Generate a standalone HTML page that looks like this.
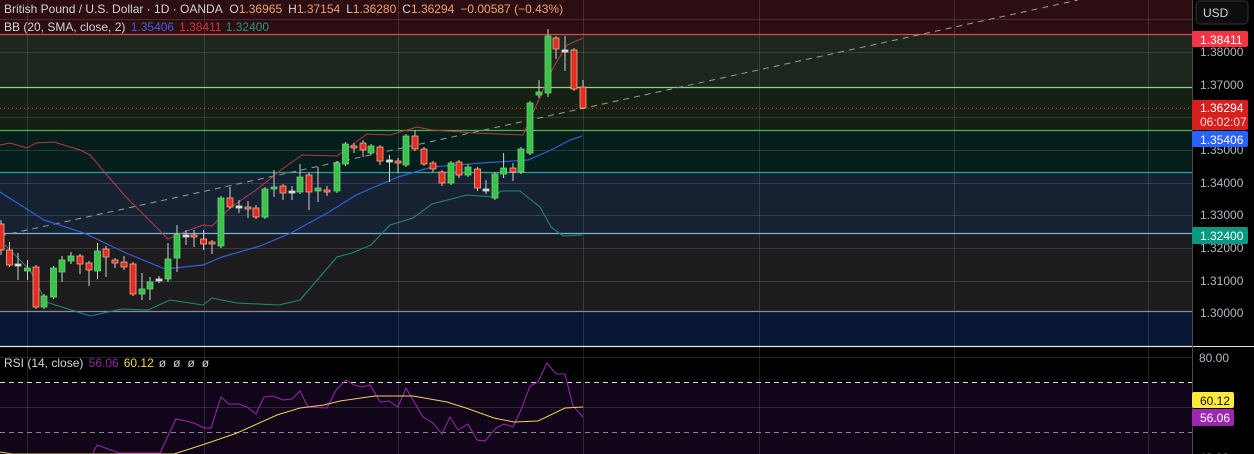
<!DOCTYPE html>
<html><head><meta charset="utf-8"><style>
html,body{margin:0;padding:0;background:#000;width:1254px;height:454px;overflow:hidden;font-family:"Liberation Sans",sans-serif}
svg text{font-family:"Liberation Sans",sans-serif}
</style></head><body>
<svg width="1254" height="454" viewBox="0 0 1254 454" xmlns="http://www.w3.org/2000/svg">
<!-- bands -->
<rect x="0" y="0" width="1192" height="34" fill="#2c0d12"/>
<rect x="0" y="34" width="1192" height="53" fill="#1c261c"/>
<rect x="0" y="87" width="1192" height="43" fill="#132012"/>
<rect x="0" y="130" width="1192" height="42" fill="#051d1b"/>
<rect x="0" y="172" width="1192" height="61" fill="#162232"/>
<rect x="0" y="233" width="1192" height="78" fill="#1c1c1e"/>
<rect x="0" y="311" width="1192" height="35" fill="#081634"/>
<rect x="0" y="347" width="1192" height="35" fill="#000"/>
<rect x="0" y="382" width="1192" height="72" fill="#110519"/>
<!-- grid -->
<g stroke="#ffffff" stroke-opacity="0.13" stroke-width="1">
<line x1="0" y1="19.5" x2="1192" y2="19.5"/><line x1="0" y1="52.5" x2="1192" y2="52.5"/><line x1="0" y1="117.5" x2="1192" y2="117.5"/><line x1="0" y1="150.5" x2="1192" y2="150.5"/><line x1="0" y1="183.5" x2="1192" y2="183.5"/><line x1="0" y1="215.5" x2="1192" y2="215.5"/><line x1="0" y1="248.5" x2="1192" y2="248.5"/><line x1="0" y1="281.5" x2="1192" y2="281.5"/><line x1="0" y1="357.5" x2="1192" y2="357.5"/><line x1="0" y1="407.5" x2="1192" y2="407.5"/>
<line x1="27.5" y1="0" x2="27.5" y2="454"/><line x1="204.5" y1="0" x2="204.5" y2="454"/><line x1="398.5" y1="0" x2="398.5" y2="454"/><line x1="583.5" y1="0" x2="583.5" y2="454"/><line x1="759.5" y1="0" x2="759.5" y2="454"/><line x1="954.5" y1="0" x2="954.5" y2="454"/><line x1="1148.5" y1="0" x2="1148.5" y2="454"/>
</g>
<!-- level lines -->
<line x1="0" y1="34.5" x2="1192" y2="34.5" stroke="#d9474d" stroke-width="1.2"/>
<line x1="0" y1="87.5" x2="1192" y2="87.5" stroke="#8ed08e" stroke-width="1.2"/>
<line x1="0" y1="130.5" x2="1192" y2="130.5" stroke="#4caf50" stroke-width="1.2"/>
<line x1="0" y1="172.5" x2="1192" y2="172.5" stroke="#26a69a" stroke-width="1.2"/>
<line x1="0" y1="233.5" x2="1192" y2="233.5" stroke="#6fb3e8" stroke-width="1.2"/>
<line x1="0" y1="311.5" x2="1192" y2="311.5" stroke="#8a8d96" stroke-width="1.2"/>
<line x1="0" y1="108.5" x2="1192" y2="108.5" stroke="#e0403a" stroke-width="1" stroke-dasharray="1,3"/>
<line x1="0" y1="382.5" x2="1192" y2="382.5" stroke="#dddddd" stroke-width="1" stroke-dasharray="5,4"/>
<line x1="0" y1="432.5" x2="1192" y2="432.5" stroke="#888" stroke-width="1" stroke-dasharray="5,4"/>
<!-- trendline -->
<line x1="0" y1="236" x2="1078" y2="0" stroke="#9a9a9a" stroke-width="1" stroke-dasharray="6,5"/>
<!-- bollinger -->
<polyline fill="none" stroke="#b83a44" stroke-width="1" points="0,145 10,143 27,148 36,143 54,142 80,150 90,155 107,175 126,197 147,218 168,239 184,232 203,225 212,226 230,208 256,190 281,170 302,155 337,156 367,134 390,135 417,127 432,130 475,133 523,135 540,97 553,68 567,45 583,38"/>
<polyline fill="none" stroke="#2f62d8" stroke-width="1.2" points="0,192 44,220 84,233 126,253 165,269 203,265 222,257 260,246 291,233 329,212 356,195 398,177 432,167 482,163 528,160 551,150 570,140 582,136"/>
<polyline fill="none" stroke="#1f8a7c" stroke-width="1" points="5,245 30,270 46,302 90,316 122,309 148,310 170,300 203,305 212,298 237,303 279,305 300,300 337,257 352,253 371,245 390,225 413,218 432,204 467,195 494,197 501,191 520,191 540,207 551,227 563,236 582,235"/>
<!-- candles -->
<g id="c" stroke-width="1"></g>
<!-- RSI -->
<polyline fill="none" stroke="#9c27b0" stroke-width="1" points="93,453 97,445 119,453 160,453 176,419 186,421 194,423 204,428 211,428 221,397 229,404 239,404 247,407 256,414 264,397 273,396 283,400 292,399 300,391 308,407 327,408 336,390 346,380 354,385 362,387 370,385 380,402 389,401 398,407 406,388 423,417 433,423 442,434 450,417 458,430 468,424 477,440 485,441 496,428 504,424 513,427 521,410 530,386 538,382 547,363 556,374 565,374 573,406 583,417"/>
<polyline fill="none" stroke="#f2d05a" stroke-width="1" points="0,452 12,454 174,454 205,444 237,433 277,415 300,408 324,405 340,401 375,396 413,396 447,402 466,408 494,418 514,422 538,421 565,408 583,407"/>
<!-- separator -->
<line x1="0" y1="346.5" x2="1254" y2="346.5" stroke="#e6e6e6" stroke-width="1.2"/>
<!-- axis -->
<rect x="1192" y="0" width="62" height="346" fill="#000"/>
<rect x="1192" y="347" width="62" height="107" fill="#000"/>
<line x1="1192.5" y1="0" x2="1192.5" y2="454" stroke="#4a4a4a"/>
<rect x="1196" y="1" width="52" height="23" rx="4" fill="#0d0d0d" stroke="#333"/>
<text x="1203" y="17" fill="#d1d4dc" font-size="12">USD</text>
<g fill="#b2b5be" font-size="12">
<text x="1200" y="56">1.38000</text><text x="1200" y="89">1.37000</text><text x="1200" y="154">1.35000</text><text x="1200" y="187">1.34000</text><text x="1200" y="219">1.33000</text><text x="1200" y="252">1.32000</text><text x="1200" y="285">1.31000</text><text x="1200" y="317">1.30000</text><text x="1199" y="362">80.00</text><text x="1199" y="462">40.00</text>
</g>
<rect x="1192" y="31" width="56" height="16" rx="2" fill="#f23645"/><text x="1200" y="44" fill="#fff" font-size="12">1.38411</text>
<rect x="1192" y="100" width="56" height="30" rx="2" fill="#d5201f"/><text x="1200" y="112" fill="#fff" font-size="12">1.36294</text><text x="1200" y="126" fill="#ffd6d6" font-size="12">06:02:07</text>
<rect x="1192" y="131" width="56" height="16" rx="2" fill="#2962ff"/><text x="1200" y="144" fill="#fff" font-size="12">1.35406</text>
<rect x="1192" y="227" width="56" height="17" rx="2" fill="#089981"/><text x="1200" y="240" fill="#fff" font-size="12">1.32400</text>
<rect x="1192" y="392" width="42" height="16" rx="2" fill="#ffeb3b"/><text x="1200" y="405" fill="#111" font-size="12">60.12</text>
<rect x="1192" y="409" width="42" height="17" rx="2" fill="#9c27b0"/><text x="1200" y="422" fill="#fff" font-size="12">56.06</text>
<!-- legends -->
<g font-size="12">
<text x="4" y="13" fill="#d1d4dc">British Pound / U.S. Dollar · 1D · OANDA <tspan dx="4">O</tspan><tspan fill="#f0a070">1.36965</tspan><tspan dx="6">H</tspan><tspan fill="#f0a070">1.37154</tspan><tspan dx="6">L</tspan><tspan fill="#f0a070">1.36280</tspan><tspan dx="6">C</tspan><tspan fill="#f0a070">1.36294</tspan><tspan dx="6" fill="#f0a070">−0.00587 (−0.43%)</tspan></text>
<text x="4" y="31" fill="#d1d4dc">BB (20, SMA, close, 2) <tspan dx="2" fill="#3f63d8">1.35406</tspan><tspan dx="5" fill="#d9313b">1.38411</tspan><tspan dx="5" fill="#1f9c86">1.32400</tspan></text>
<text x="4" y="367" fill="#d1d4dc">RSI (14, close) <tspan dx="2" fill="#8e2aa0">56.06</tspan><tspan dx="5" fill="#f2d94a">60.12</tspan><tspan dx="5">ø</tspan><tspan dx="7">ø</tspan><tspan dx="7">ø</tspan><tspan dx="7">ø</tspan></text>
</g>
</svg>
<script>
var d=[[1,224,250,220,255,0],[9.5,250,265,242,267,0],[18,264,264,253,280,2],[27.5,268,271,260,280,1],[36,267,307,265,309,0],[44,296,307,294,309,1],[53.5,268,297,266,299,1],[62,260,272,256,282,1],[71,256,261,252,264,1],[80,256,264,254,274,0],[89,263,270,261,286,0],[97.5,251,271,243,279,1],[106,249,257,246,277,0],[115,260,263,258,268,0],[124,262,267,256,270,0],[133,264,294,262,296,0],[142,289,294,273,300,1],[150,282,289,277,300,1],[159,279,279,276,283,2],[168,259,279,243,282,1],[177,234,258,225,272,1],[186,235,235,230,245,2],[194,235,237,230,247,0],[203.6,239,244,230,250,0],[212,242,244,240,254,0],[221,198,246,196,248,1],[230,198,207,187,209,0],[239,206,206,200,213,2],[248,207,208,201,218,0],[256,208,217,205,219,0],[265,189,217,187,219,1],[274,187,189,170,197,1],[283,186,193,184,200,0],[292,191,191,186,200,2],[300,177,192,164,194,1],[309,175,192,173,210,0],[318,188,191,167,202,1],[327,190,190,186,196,0],[337,163,191,161,193,1],[345.5,144,164,142,166,1],[354,146,148,143,153,0],[363,143,150,140,157,0],[371,146,153,144,155,1],[380,147,161,145,165,0],[389.5,160,160,155,182,2],[398,161,163,158,173,0],[406,136,165,134,167,1],[415,136,149,130,151,0],[424,149,164,147,166,0],[433,163,169,161,172,0],[442,172,183,170,186,0],[451,163,183,161,185,1],[459,162,175,160,178,0],[468,167,175,164,177,1],[477.5,169,188,167,191,0],[486,189,189,180,194,2],[495,174,198,172,200,1],[503.6,168,174,153,178,1],[513,168,172,163,181,0],[521,149,172,147,174,1],[530,103,153,101,155,1],[539,92,95,80,98,1],[548,36,93,29,97,1],[556,38,49,36,59,0],[565,50,50,36,71,2],[574,50,89,48,91,0],[583,87,108,80,109,0]];
var g=document.getElementById('c'),s='';
d.forEach(function(c){var x=c[0],col=c[5]==1?'#3cc14c':c[5]==0?'#e02d25':'#c8e6c9',st=c[5]==1?'#62d96e':c[5]==0?'#ffab82':'#d8d8d8';
s+='<line x1="'+x+'" y1="'+c[3]+'" x2="'+x+'" y2="'+c[4]+'" stroke="#d0d0d0"/>';
var h=Math.max(c[2]-c[1],2);
s+='<rect x="'+(x-3)+'" y="'+c[1]+'" width="6" height="'+h+'" fill="'+col+'" stroke="'+st+'" stroke-width="0.8"/>';});
g.innerHTML=s;
</script>
</body></html>
